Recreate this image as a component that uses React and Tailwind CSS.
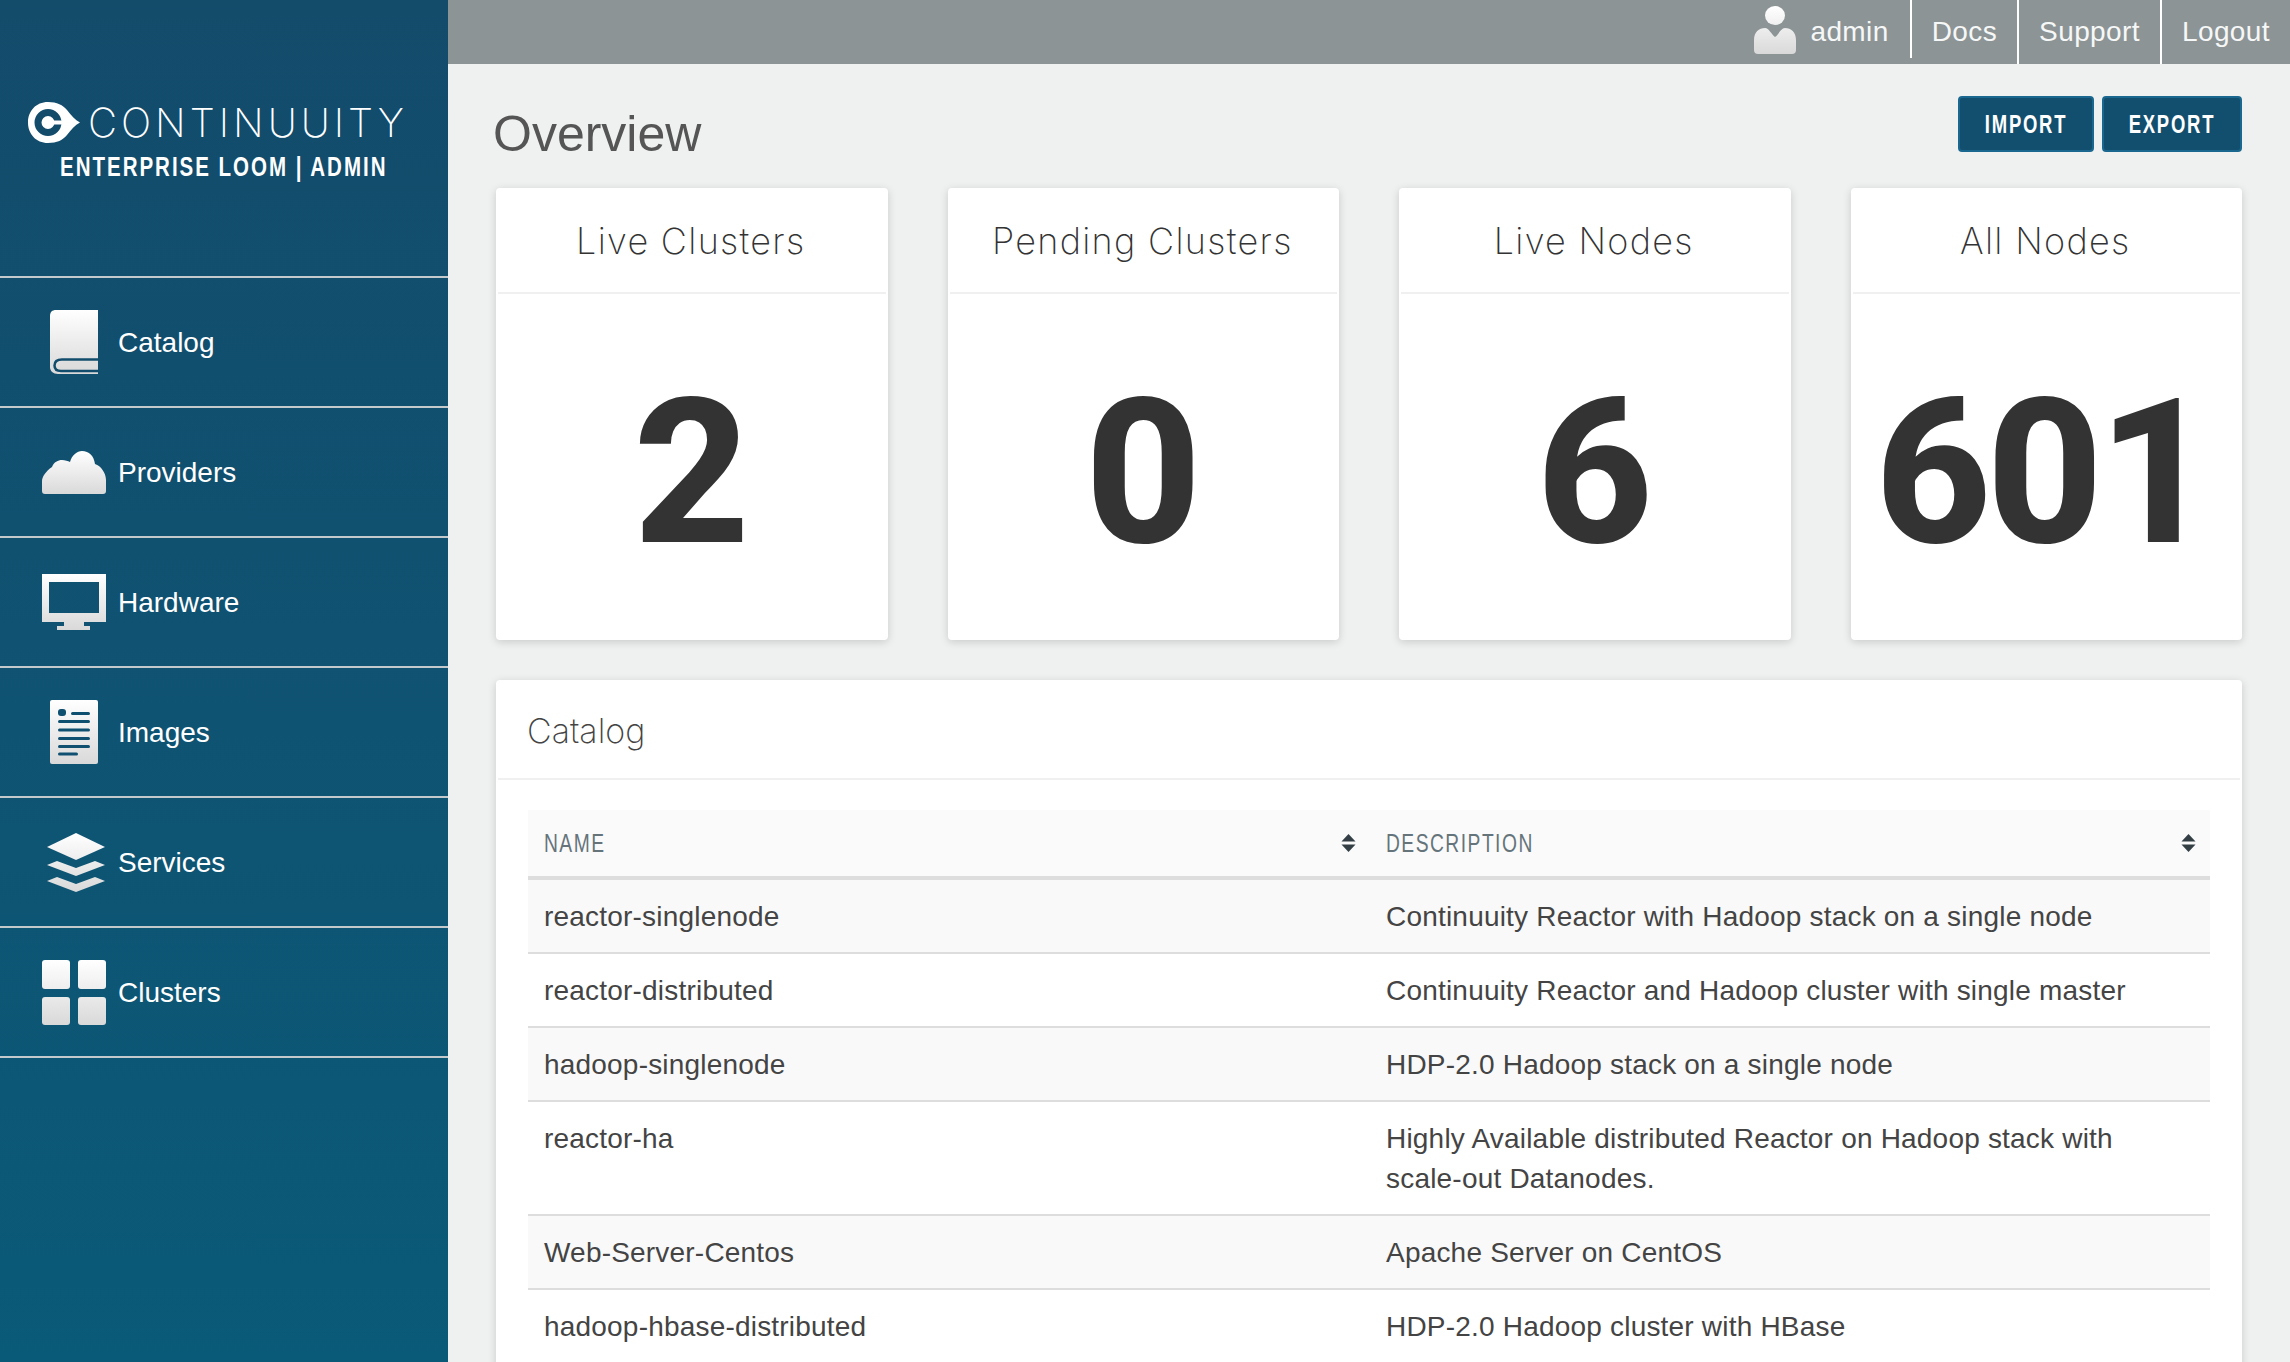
import { useId } from 'react';

const sans = "[font-family:'Liberation_Sans',Arial,sans-serif]";

// white-to-grey fill all the sidebar icons share
function GradIcon({ w, h, className, children }) {
  const id = useId();
  return (
    <svg width={w} height={h} viewBox={`0 0 ${w} ${h}`} className={className} fill={`url(#${id})`}>
      <defs>
        <linearGradient id={id} gradientUnits="userSpaceOnUse" x1="0" y1="0" x2="0" y2={h}>
          <stop offset="0" stopColor="#ffffff" />
          <stop offset="1" stopColor="#d9d9d9" />
        </linearGradient>
      </defs>
      {children}
    </svg>
  );
}

const BookIcon = () => (
  <GradIcon w={48} h={64}>
    <path d="M6 0H48V64H8C3 64 0 61 0 57V6C0 2 2 0 6 0Z" />
    <path d="M48 49.5H12C7 49.5 4.5 52 4.5 55.5C4.5 59 7 61 11 61H48" fill="none" stroke="#124c6c" strokeWidth="2.5" />
    <rect x="12" y="52" width="36" height="5" fill="#dedede" />
  </GradIcon>
);

const CloudIcon = () => (
  <GradIcon w={64} h={43}>
    <path d="M3 43C1 43 0 42 0 40V30C0 26 4 20 10 16C12 11 16 9 20 9C23 9 26 10 28 11C30 4 35 0 40 0C47 0 52 5 53 13C59 15 64 22 64 29V40C64 42 63 43 61 43Z" />
  </GradIcon>
);

const MonitorIcon = () => (
  <GradIcon w={64} h={56}>
    <path fillRule="evenodd" d="M0 0H64V48H0ZM7 8V39H57V8Z" />
    <path d="M22 48H42V52H48V56H15V52H22Z" />
  </GradIcon>
);

const ImagesIcon = () => (
  <GradIcon w={48} h={64}>
    <rect width="48" height="64" rx="2" />
    <g fill="#0f5070">
      <rect x="8" y="9" width="8" height="7" rx="3" />
      <rect x="21" y="12" width="19" height="3" rx="1.5" />
      <rect x="8" y="20" width="32" height="3" rx="1.5" />
      <rect x="8" y="28.5" width="32" height="3" rx="1.5" />
      <rect x="8" y="37" width="32" height="3" rx="1.5" />
      <rect x="8" y="45" width="32" height="3" rx="1.5" />
      <rect x="8" y="52.5" width="20" height="3" rx="1.5" />
    </g>
  </GradIcon>
);

const ServicesIcon = () => (
  <GradIcon w={58} h={59} className="ml-[4px]">
    <path d="M0 14L29 0L58 14L29 27Z" />
    <path d="M0 32L10 28L29 35L48 28L58 32L29 43Z" />
    <path d="M0 48L10 44L29 51L48 44L58 48L29 59Z" />
  </GradIcon>
);

const ClustersIcon = () => (
  <GradIcon w={64} h={65}>
    <rect x="0" y="0" width="28" height="29" rx="3" />
    <rect x="36" y="0" width="28" height="29" rx="3" />
    <rect x="0" y="37" width="28" height="28" rx="3" />
    <rect x="36" y="37" width="28" height="28" rx="3" />
  </GradIcon>
);

const UserIcon = () => (
  <GradIcon w={42} h={48}>
    <ellipse cx="21" cy="9.5" rx="10" ry="9.5" />
    <path d="M0 44V34C0 26 5 22 11 22C15 22 17 28 21 31C25 28 27 22 31 22C37 22 42 26 42 34V44Q42 48 38 48H4Q0 48 0 44Z" />
  </GradIcon>
);

const SortIcon = () => (
  <svg width="15" height="18" viewBox="0 0 15 18" fill="#333f44" className="shrink-0">
    <path d="M7.5 0L14.5 7.6H0.5Z" />
    <path d="M7.5 18L14.5 10.4H0.5Z" />
  </svg>
);

const LogoMark = () => (
  <svg width="52" height="41" viewBox="0 0 52 41" className="shrink-0">
    <path d="M20 0C29 0 35 3 39 8C43 13 47 18 52 20.5C47 23 43 28 39 33C35 38 29 41 20 41C8 41 0 32 0 20.5C0 9 8 0 20 0Z" fill="#ffffff" />
    <circle cx="20" cy="20.5" r="10" fill="none" stroke="#134b6b" strokeWidth="7" />
    <rect x="20" y="18.5" width="24" height="4" fill="#ffffff" />
  </svg>
);

const navItems = [
  { label: 'Catalog', icon: BookIcon },
  { label: 'Providers', icon: CloudIcon },
  { label: 'Hardware', icon: MonitorIcon },
  { label: 'Images', icon: ImagesIcon },
  { label: 'Services', icon: ServicesIcon },
  { label: 'Clusters', icon: ClustersIcon },
];

const stats = [
  { title: 'Live Clusters', value: '2', valueClass: '' },
  { title: 'Pending Clusters', value: '0', valueClass: '' },
  { title: 'Live Nodes', value: '6', valueClass: '' },
  { title: 'All Nodes', value: '601', valueClass: 'tracking-[-5px] pr-[8px]' },
];

const rows = [
  ['reactor-singlenode', 'Continuuity Reactor with Hadoop stack on a single node'],
  ['reactor-distributed', 'Continuuity Reactor and Hadoop cluster with single master'],
  ['hadoop-singlenode', 'HDP-2.0 Hadoop stack on a single node'],
  ['reactor-ha', 'Highly Available distributed Reactor on Hadoop stack with scale-out Datanodes.'],
  ['Web-Server-Centos', 'Apache Server on CentOS'],
  ['hadoop-hbase-distributed', 'HDP-2.0 Hadoop cluster with HBase'],
];

function Sidebar() {
  return (
    <aside className="w-[448px] shrink-0 bg-gradient-to-b from-[#134b6b] to-[#095a78] text-white">
      <div className="h-[278px] border-b-2 border-[#c4cacc] flex flex-col pl-[28px] pt-[102px]">
        <div className="flex items-center gap-[8px]">
          <LogoMark />
          <span className="[font-family:Inter,sans-serif] font-extralight text-[40px] leading-[41px] tracking-[4px]">CONTINUUITY</span>
        </div>
        <div className={`${sans} font-bold text-[27px] leading-[30px] tracking-[2.6px] mt-[9px] ml-[32px] whitespace-nowrap origin-left scale-x-[0.76]`}>
          ENTERPRISE LOOM | ADMIN
        </div>
      </div>
      <nav>
        {navItems.map((item) => (
          <a key={item.label} className="h-[130px] border-b-2 border-[#c4cacc] flex items-center pl-[42px] gap-[12px]">
            <span className="w-[64px] flex justify-center"><item.icon /></span>
            <span className={`${sans} text-[28px] pt-[2px]`}>{item.label}</span>
          </a>
        ))}
      </nav>
    </aside>
  );
}

function TopBar() {
  return (
    <header className={`${sans} h-[64px] bg-[#8c9496] flex justify-end text-[28px] tracking-[0.4px] text-[#f6f7f7]`}>
      <div className="flex items-start h-[58px] border-r-2 border-white pr-[21px] pt-[6px]">
        <UserIcon />
        <span className="ml-[14px] leading-[52px]">admin</span>
      </div>
      <a className="flex items-center h-full border-r-2 border-white px-[20px]">Docs</a>
      <a className="flex items-center h-full border-r-2 border-white px-[20px]">Support</a>
      <a className="flex items-center h-full px-[20px]">Logout</a>
    </header>
  );
}

function StatCard({ title, value, valueClass }) {
  return (
    <div className="h-[452px] bg-white rounded-[4px] shadow-[0_2px_8px_rgba(0,0,0,0.16)] flex flex-col">
      <div className="h-[106px] mx-[2px] pt-[2px] pr-[2px] border-b-2 border-[#f0f0f0] flex items-center justify-center [font-family:Inter,sans-serif] font-extralight text-[36px] tracking-[1.3px] text-[#333333]">
        {title}
      </div>
      <div className={`flex-1 flex items-center justify-center [font-family:Roboto,sans-serif] font-extrabold text-[202px] leading-none text-[#333333] pt-[12px] ${valueClass}`}>
        {value}
      </div>
    </div>
  );
}

function CatalogPanel() {
  return (
    <section className="mt-[40px] bg-white rounded-t-[4px] shadow-[0_2px_8px_rgba(0,0,0,0.16)] pb-[40px]">
      <div className="h-[100px] mx-[2px] pt-[2px] border-b-2 border-[#f0f0f0] flex items-center pl-[29px] [font-family:Inter,sans-serif] font-extralight text-[34px] text-[#444444]">
        Catalog
      </div>
      <div className="px-[32px] pt-[30px]">
        <table className={`${sans} w-full table-fixed border-separate border-spacing-0 text-left text-[28px] tracking-[0.2px] text-[#444444]`}>
          <thead>
            <tr className="bg-[#fafafa] text-[#65747a]">
              {['NAME', 'DESCRIPTION'].map((h, i) => (
                <th key={h} className={`${i === 0 ? 'w-[842px]' : ''} h-[70px] border-b-4 border-[#dddddd] p-0 font-normal`}>
                  <div className="flex items-center justify-between pl-[16px] pr-[14px]">
                    <span className="text-[26px] tracking-[2px] origin-left scale-x-[0.74]">{h}</span>
                    <SortIcon />
                  </div>
                </th>
              ))}
            </tr>
          </thead>
          <tbody>
            {rows.map(([name, desc], i) => (
              <tr key={name} className={i % 2 === 0 ? 'bg-[#f9f9f9]' : 'bg-white'}>
                <td className="align-top pl-[16px] pr-[16px] pt-[17px] pb-[15px] leading-[40px] border-b-2 border-[#dddddd]">{name}</td>
                <td className="align-top pl-[16px] pr-[40px] pt-[17px] pb-[15px] leading-[40px] border-b-2 border-[#dddddd]">{desc}</td>
              </tr>
            ))}
          </tbody>
        </table>
      </div>
    </section>
  );
}

export default function App() {
  return (
    <div className="h-[1362px] overflow-hidden flex bg-[#eff1f1]">
      <Sidebar />
      <main className="flex-1 min-w-0">
        <TopBar />
        <div className="px-[48px]">
          <div className="h-[124px] flex items-start justify-between">
            <h1 className={`${sans} text-[50px] leading-[56px] mt-[42px] -ml-[3px] text-[#555555]`}>Overview</h1>
            <div className="flex gap-[8px] mt-[32px]">
              {['IMPORT', 'EXPORT'].map((b, i) => (
                <button
                  key={b}
                  className={`${i === 0 ? 'w-[136px]' : 'w-[140px]'} h-[56px] rounded-[4px] bg-[#124f6f] border-2 border-[#1a6890] text-white ${sans} font-bold text-[26px] tracking-[2.5px]`}
                >
                  <span className="inline-block scale-x-[0.71]">{b}</span>
                </button>
              ))}
            </div>
          </div>
          <div className="grid grid-cols-4 gap-[60px]">
            {stats.map((s) => <StatCard key={s.title} {...s} />)}
          </div>
          <CatalogPanel />
        </div>
      </main>
    </div>
  );
}
